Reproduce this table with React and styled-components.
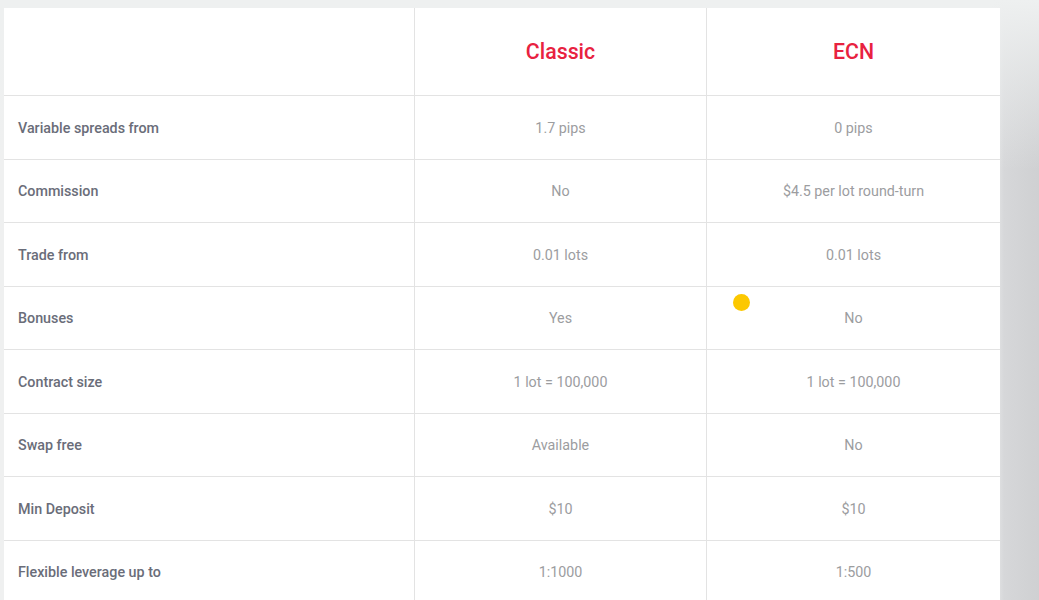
import styled, { createGlobalStyle } from 'styled-components'

const Global = createGlobalStyle`
  html, body {
    margin: 0;
    height: 100%;
  }
  body {
    font-family: Roboto, "Liberation Sans", sans-serif;
    overflow: hidden;
    background:
      linear-gradient(to bottom, #eef0f0 0, rgba(238,240,240,0) 170px),
      linear-gradient(to right, #eff0f0 0, #eff0f0 990px, #d6d7d9 1004px, #cfd0d2 100%);
  }
`

const Page = styled.div`
  padding: 8px 0 0 4px;
`

const Table = styled.div`
  width: 996px;
  background: #fff;
  display: grid;
  grid-template-columns: 411px 292px 293px;
  grid-auto-rows: 63.5px;
  grid-template-rows: 88px;
`

const Cell = styled.div`
  display: flex;
  align-items: center;
  justify-content: ${p => (p.$label ? 'flex-start' : 'center')};
  padding: ${p => (p.$label ? '1px 14px 0' : '1px 0 0')};
  border-bottom: 1px solid #e3e3e3;
  border-right: ${p => (p.$last ? 'none' : '1px solid #e3e3e3')};
  font-size: 14.3px;
  font-weight: ${p => (p.$label ? 500 : 400)};
  color: ${p => (p.$label ? '#6a6d79' : '#9c9d9f')};
  position: relative;
`

const Head = styled(Cell)`
  font-size: 21.3px;
  font-weight: 500;
  color: #e8223f;
  padding: 0;
`

const Dot = styled.span`
  position: absolute;
  left: 26px;
  top: 7px;
  width: 17px;
  height: 17px;
  border-radius: 50%;
  background: #fcc800;
`

const rows = [
  ['Variable spreads from', '1.7 pips', '0 pips'],
  ['Commission', 'No', '$4.5 per lot round-turn'],
  ['Trade from', '0.01 lots', '0.01 lots'],
  ['Bonuses', 'Yes', 'No'],
  ['Contract size', '1 lot = 100,000', '1 lot = 100,000'],
  ['Swap free', 'Available', 'No'],
  ['Min Deposit', '$10', '$10'],
  ['Flexible leverage up to', '1:1000', '1:500'],
]

export default function App() {
  return (
    <>
      <Global />
      <Page>
        <Table>
          <Cell $label />
          <Head>Classic</Head>
          <Head $last>ECN</Head>
          {rows.map(([label, classic, ecn]) => (
            <>
              <Cell key={label} $label>{label}</Cell>
              <Cell key={label + 'c'}>{classic}</Cell>
              <Cell key={label + 'e'} $last>
                {label === 'Bonuses' && <Dot />}
                {ecn}
              </Cell>
            </>
          ))}
        </Table>
      </Page>
    </>
  )
}
